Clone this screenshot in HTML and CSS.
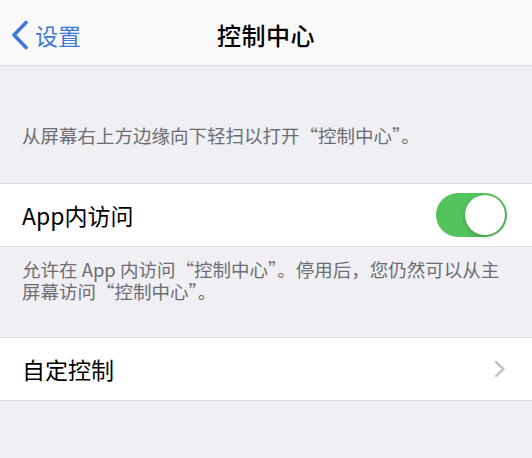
FILE: index.html
```html
<!DOCTYPE html>
<html lang="zh-CN">
<head>
  <meta charset="UTF-8">
  <meta name="viewport" content="width=device-width, initial-scale=1.0">
  <title>控制中心</title>
  <link rel="stylesheet" href="styles.css">
</head>
<body>
  <div class="navbar">
    <a class="back" href="#">
      <svg class="back-icon" width="18" height="30" viewBox="0 0 18 30">
        <polyline points="15,2.5 3,15 15,27.5" fill="none" stroke="#3d7ad8" stroke-width="3.6" stroke-linecap="round" stroke-linejoin="round"/>
      </svg>
      <span>设置</span>
    </a>
    <h1 class="title">控制中心</h1>
    <div></div>
  </div>

  <p class="note note-top">从屏幕右上方边缘向下轻扫以打开“控制中心”。</p>

  <div class="group">
    <div class="cell">
      <span class="label">App内访问</span>
      <div class="switch on"><div class="knob"></div></div>
    </div>
  </div>

  <p class="note note-below">允许在 App 内访问“控制中心”。停用后，您仍然可以从主屏幕访问“控制中心”。</p>

  <div class="group">
    <div class="cell">
      <span class="label">自定控制</span>
      <svg class="chevron" width="12" height="18" viewBox="0 0 12 18">
        <polyline points="2,2 9.5,9 2,16" fill="none" stroke="#c4c4c8" stroke-width="2.4" stroke-linecap="round" stroke-linejoin="round"/>
      </svg>
    </div>
  </div>
</body>
</html>
```

FILE: styles.css
```css
body{
  margin: 0;
  background-color: #efeff4;
  font-family: "Noto Sans CJK SC", "Noto Sans", sans-serif;
  color: #000;
}

.navbar{
  display: grid;
  grid-template-columns: 1fr auto 1fr;
  align-items: center;
  height: 65px;
  background-color: #f9f9fa;
  border-bottom: 1px solid #d8d8dc;
}
.back{
  display: flex;
  align-items: center;
  gap: 6px;
  padding-left: 11px;
  color: #3d7ad8;
  font-size: 23px;
  text-decoration: none;
  margin-top: 4px;
}
.title{
  margin: 4px 0 0 0;
  font-size: 24px;
  font-weight: 500;
  letter-spacing: 0.5px;
}

.note{
  margin: 0;
  padding: 0 24px 0 22px;
  font-size: 18.5px;
  line-height: 22px;
  color: #6d6d72;
}
.note-top{
  padding-top: 58px;
  padding-bottom: 37px;
}
.note-below{
  padding-top: 11px;
  padding-bottom: 35px;
}

.group{
  background-color: #fff;
  border-top: 1px solid #dcdce0;
  border-bottom: 1px solid #dcdce0;
}
.cell{
  display: flex;
  align-items: center;
  justify-content: space-between;
  height: 62px;
  padding: 0 25px 0 22px;
}
.label{
  font-size: 23px;
}

.switch{
  width: 71px;
  height: 44px;
  border-radius: 22px;
  background-color: #e5e5ea;
  display: flex;
  align-items: center;
  padding: 0 2px;
  box-sizing: border-box;
}
.switch.on{
  background-color: #53c35c;
  justify-content: flex-end;
}
.knob{
  width: 40px;
  height: 40px;
  border-radius: 50%;
  background-color: #fff;
  box-shadow: 0 2px 4px rgba(0,0,0,0.18), 0 0 1px rgba(0,0,0,0.2);
}

.chevron{
  margin-right: 1px;
}
```
